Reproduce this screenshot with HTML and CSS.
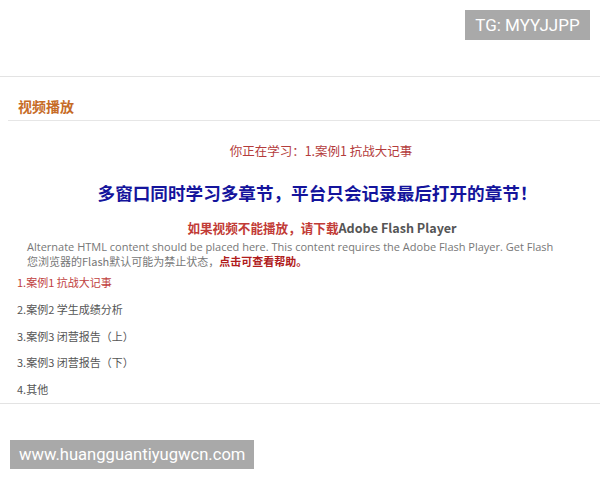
FILE: index.html
```html
<!DOCTYPE html>
<html lang="zh-CN">
<head>
<meta charset="utf-8">
<title>视频播放</title>
<link rel="stylesheet" href="styles.css">
</head>
<body>
<div class="top">
  <div class="tg">TG: MYYJJPP</div>
</div>
<div class="panel-title">视频播放</div>
<div class="content">
  <div class="studying">你正在学习：1.案例1 抗战大记事</div>
  <div class="warn">多窗口同时学习多章节，平台只会记录最后打开的章节！</div>
  <div class="flash"><span class="flash-red">如果视频不能播放，请下载</span>Adobe Flash Player</div>
  <div class="alt">
    <div>Alternate HTML content should be placed here. This content requires the Adobe Flash Player. Get Flash</div>
    <div class="alt-cn">您浏览器的Flash默认可能为禁止状态，<b class="help">点击可查看帮助。</b></div>
  </div>
  <ul class="chapters">
    <li class="current">1.案例1 抗战大记事</li>
    <li>2.案例2 学生成绩分析</li>
    <li>3.案例3 闭营报告（上）</li>
    <li>3.案例3 闭营报告（下）</li>
    <li>4.其他</li>
  </ul>
</div>
<div class="footer">
  <div class="site">www.huangguantiyugwcn.com</div>
</div>
</body>
</html>
```

FILE: styles.css
```css
html, body {
  margin: 0;
  padding: 0;
  background: #ffffff;
}
body {
  font-family: "Noto Sans CJK SC", sans-serif;
  color: #555;
}
.top {
  height: 66px;
  padding: 10px 10px 0 0;
  border-bottom: 1px solid #e3e3e3;
  display: flex;
  justify-content: flex-end;
  align-items: flex-start;
}
.tg {
  width: 125px;
  height: 30px;
  background: #a9a9a9;
  color: #fff;
  font-family: Roboto, "Liberation Sans", sans-serif;
  font-size: 17px;
  display: flex;
  align-items: center;
  justify-content: center;
}
.panel-title {
  margin-left: 8px;
  padding: 19px 0 4px 10px;
  line-height: 20px;
  font-size: 14px;
  font-weight: bold;
  color: #c66b26;
  border-bottom: 1px solid #e6e6e6;
}
.content {
  padding: 20px 0 0 17px;
}
.studying {
  text-align: center;
  font-size: 12.5px;
  line-height: 20px;
  color: #b43c3c;
  padding-left: 25px;
}
.warn {
  margin-top: 19px;
  text-align: center;
  font-size: 17.6px;
  line-height: 26px;
  font-weight: bold;
  color: #14149c;
  padding-left: 18px;
}
.flash {
  margin-top: 13px;
  text-align: center;
  font-size: 12.6px;
  line-height: 18px;
  font-weight: bold;
  color: #555;
  padding-left: 27px;
}
.flash-red {
  color: #c23b36;
}
.alt {
  margin-top: 2px;
  margin-left: 10px;
  font-family: "Open Sans", "Noto Sans CJK SC", sans-serif;
  font-size: 11px;
  line-height: 15px;
  color: #777;
  white-space: nowrap;
}
.alt-cn {
  font-family: "Noto Sans CJK SC", sans-serif;
  font-size: 11px;
}
.help {
  color: #b01c1c;
}
.chapters {
  list-style: none;
  margin: 0;
  padding: 0;
}
.chapters li {
  font-size: 11px;
  line-height: 26.75px;
  color: #555;
}
.chapters li.current {
  color: #c0403d;
}
.footer {
  border-top: 1px solid #e3e3e3;
  padding: 36px 0 0 10px;
}
.site {
  display: inline-block;
  height: 29px;
  line-height: 29px;
  padding: 0 9px;
  background: #a9a9a9;
  color: #fff;
  font-family: Roboto, "Liberation Sans", sans-serif;
  font-size: 16.6px;
}
```
